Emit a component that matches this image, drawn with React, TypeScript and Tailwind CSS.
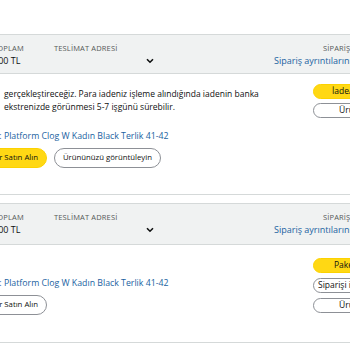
import React from 'react';

const ChevronDown = () => (
    <svg width="8" height="6" viewBox="0 0 8 6" className="inline-block">
        <path d="M1 1.2 L4 4.2 L7 1.2" fill="none" stroke="#0f1111" strokeWidth="1.6" />
    </svg>
);

interface SideButton {
    label: string;
    primary?: boolean;
    pl: string;
}

interface OrderCardProps {
    note?: string;
    sideButtons: SideButton[];
    buyAgainPrimary?: boolean;
    showView?: boolean;
    headerH: string;
    bodyH: string;
    sideTop: string;
    sideGap: string;
    linkTop: string;
}

const OrderCard: React.FC<OrderCardProps> = ({ note, sideButtons, buyAgainPrimary, showView, headerH, bodyH, sideTop, sideGap, linkTop }) => {
    return (
        <div className="border border-[#d5d9d9] rounded-lg overflow-hidden bg-white">
            {/* Header */}
            <div className={`bg-[#f0f2f2] border-b border-[#d5d9d9] flex ${headerH}`}>
                <div className="w-[93px] pl-[32px] pt-[8px]">
                    <div className="text-[7.5px] text-[#565959] tracking-[0.02em] leading-[11px]">TOPLAM</div>
                    <div className="text-[9px] text-[#0f1111] leading-[13px]">200 TL</div>
                </div>
                <div className="w-[220px] pt-[8px]">
                    <div className="text-[7.5px] text-[#565959] tracking-[0.02em] leading-[11px]">TESLİMAT ADRESİ</div>
                    <div className="h-[13px] flex items-center pl-[92px] pt-[1px]">
                        <ChevronDown />
                    </div>
                </div>
                <div className="pt-[8px] whitespace-nowrap">
                    <div className="text-[7.5px] text-[#565959] tracking-[0.02em] leading-[11px] pl-[49px]">SİPARİŞ # 407-2281934-5561921</div>
                    <div className="text-[9px] text-[#2162a1] leading-[13px]">Sipariş ayrıntılarını görüntüleyin</div>
                </div>
            </div>

            {/* Body */}
            <div className={`flex ${bodyH}`}>
                <div className="w-[352px]">
                    {note && (
                        <p className="ml-[43px] mt-[13px] text-[8.5px] leading-[13px] text-[#0f1111] w-[268px]">{note}</p>
                    )}
                    <div className={`${linkTop} ml-[11px] whitespace-nowrap text-[8.75px] leading-[13px] text-[#2162a1]`}>
                        Classic: Platform Clog W Kadın Black Terlik 41-42
                    </div>
                    <div className="flex gap-[7px] mt-[5px] pl-[9px]">
                        <button className={`h-[20px] px-[8px] rounded-full text-[7.75px] text-[#0f1111] whitespace-nowrap ${buyAgainPrimary ? 'bg-[#ffd814] border border-[#fcd200]' : 'bg-white border border-[#8d9096]'}`}>
                            Tekrar Satın Alın
                        </button>
                        {showView && (
                            <button className="h-[20px] px-[8px] rounded-full bg-white border border-[#8d9096] text-[7.75px] text-[#0f1111] whitespace-nowrap">
                                Ürününüzü görüntüleyin
                            </button>
                        )}
                    </div>
                </div>
                <div className={`flex flex-col ${sideGap} ${sideTop}`}>
                    {sideButtons.map((b, i) => (
                        <div key={i} className={`w-[120px] h-[15px] rounded-full flex items-center text-[8.5px] text-[#0f1111] whitespace-nowrap ${b.pl} ${b.primary ? 'bg-[#ffd814] border border-[#fcd200]' : 'bg-white border border-[#8d9096]'}`}>
                            {b.label}
                        </div>
                    ))}
                </div>
            </div>
        </div>
    );
};

export default function App() {
    return (
        <div className="w-[350px] h-[350px] overflow-hidden bg-white font-['Open_Sans',sans-serif]">
            <div className="pt-[34px] -ml-[40px] w-[540px] flex flex-col gap-[8px]">
                <OrderCard
                    note="gerçekleştireceğiz. Para iadeniz işleme alındığında iadenin banka ekstrenizde görünmesi 5-7 işgünü sürebilir."
                    headerH="h-[39px]"
                    bodyH="h-[120px]"
                    sideTop="pt-[10px]"
                    sideGap="gap-[4px]"
                    linkTop="mt-[17px]"
                    buyAgainPrimary
                    showView
                    sideButtons={[
                        { label: 'İade/değişim durumu', primary: true, pl: 'pl-[18px]' },
                        { label: 'Ürününüzü görüntüleyin', pl: 'pl-[25px]' },
                    ]}
                />
                <OrderCard
                    headerH="h-[41px]"
                    bodyH="h-[97px]"
                    sideTop="pt-[13px]"
                    sideGap="gap-[5px]"
                    linkTop="mt-[32px]"
                    sideButtons={[
                        { label: 'Paketi takip edin', primary: true, pl: 'pl-[20px]' },
                        { label: 'Siparişi iade edin veya değiştirin', pl: 'pl-[4px]' },
                        { label: 'Ürün yorumu yazın', pl: 'pl-[25px]' },
                    ]}
                />
                <div className="border border-[#d5d9d9] rounded-lg h-[60px]" />
            </div>
        </div>
    );
}
